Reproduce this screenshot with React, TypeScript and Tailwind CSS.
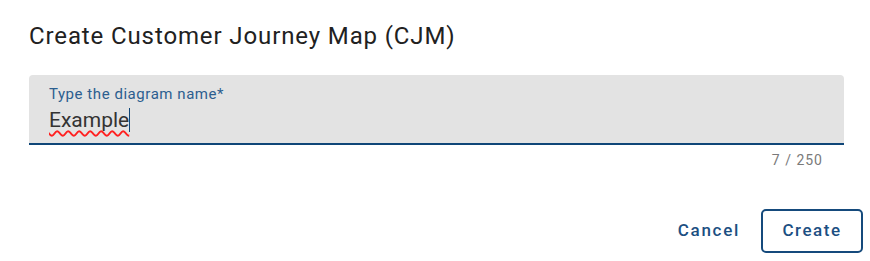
import React from "react";

const App = () => {
  return (
    <div
      className="w-[870px] h-[261px] bg-white flex flex-col pl-[29px] pr-[7px] pt-[20px]"
      style={{ fontFamily: "Roboto, 'Noto Sans', sans-serif" }}
    >
      {/* Title */}
      <h2 className="text-[24px] leading-[32px] font-normal tracking-[0.88px] text-[#212121]">
        Create Customer Journey Map (CJM)
      </h2>

      {/* Name field */}
      <div className="mt-[23px] w-[815px]">
        <div className="bg-[#e3e3e3] rounded-t-[4px] border-b-2 border-[#0f4678] px-[20px] pt-[9px] pb-[9px]">
          <label className="block text-[15px] leading-[20px] tracking-[0.55px] text-[#2c5e8f]">
            Type the diagram name*
          </label>
          <div className="mt-[2px] flex items-center text-[21px] leading-[28px] text-[#333333]">
            <span className="underline decoration-wavy decoration-[#ff2020] decoration-[1.5px] underline-offset-[3px] [text-decoration-skip-ink:none]">
              Example
            </span>
            <span className="w-px h-[24px] bg-[#0f4678]" />
          </div>
        </div>
        <div className="mt-[5px] pr-[21px] text-right text-[14px] leading-[20px] tracking-[1px] text-[#7a7a7a]">
          7 / 250
        </div>
      </div>

      {/* Actions */}
      <div className="mt-[39px] flex justify-end items-center gap-[5px]">
        <button className="h-[44px] px-[16px] text-[17px] font-medium tracking-[1.7px] text-[#1c4f82] rounded-[4px]">
          Cancel
        </button>
        <button className="h-[44px] w-[102px] flex items-center justify-center border-2 border-[#154a7c] rounded-[5px] text-[17px] font-medium tracking-[1.5px] text-[#1c4f82]">
          Create
        </button>
      </div>
    </div>
  );
};

export default App;
